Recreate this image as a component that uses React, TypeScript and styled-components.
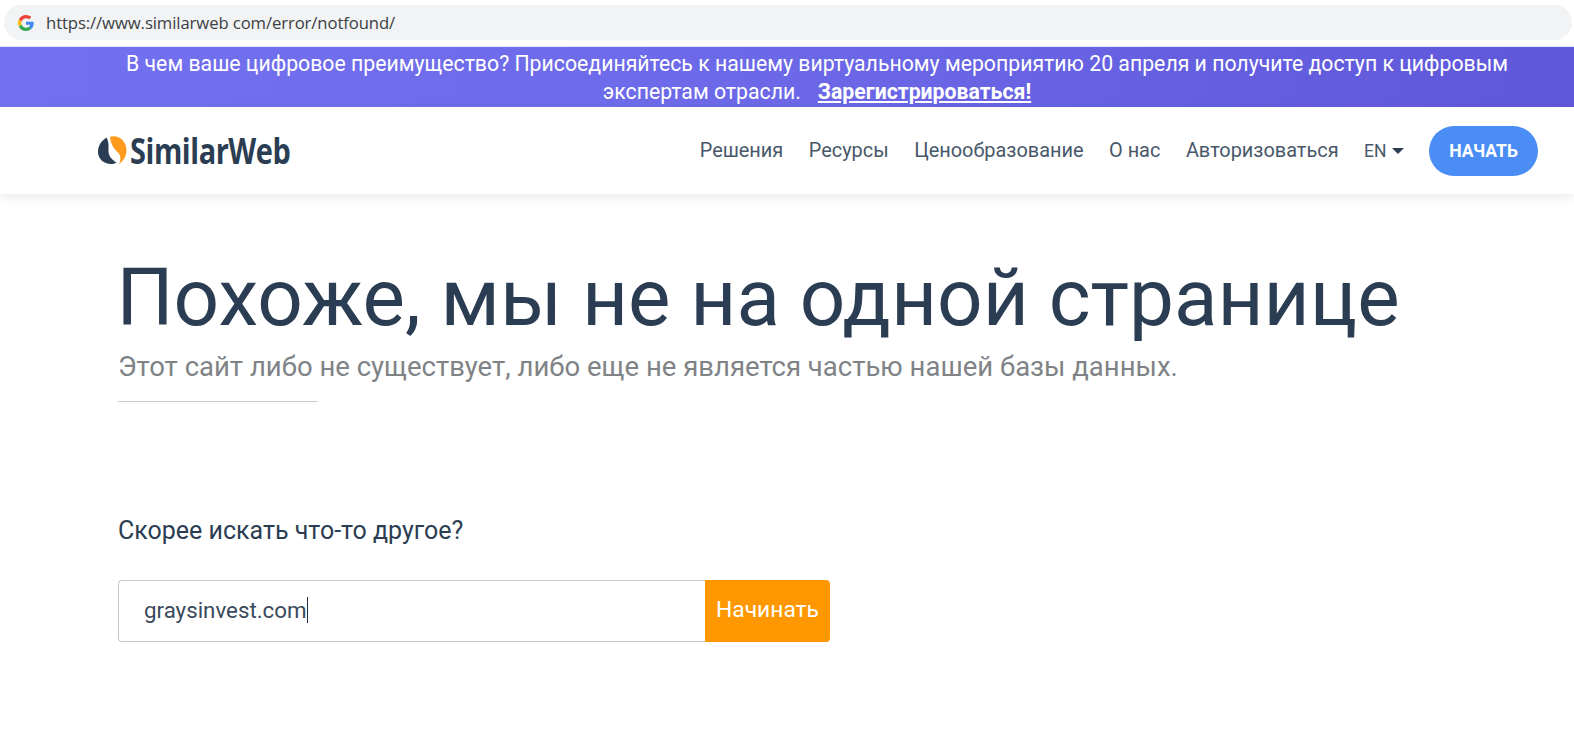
import React from 'react';
import styled, { createGlobalStyle } from 'styled-components';

const Global = createGlobalStyle`
  html, body { margin: 0; padding: 0; background: #fff; }
  body { font-family: Roboto, "Liberation Sans", sans-serif; color: #2b3d52; overflow: hidden; }
`;
const Page = styled.div`width: 1574px; height: 737px; overflow: hidden; background: #fff;`;
const BrowserBar = styled.div`height: 47px; box-sizing: border-box; padding: 5px 2px 6px 4px; border-bottom: 1px solid #e3e6f5;`;
const AddressField = styled.div`
  height: 35px; border-radius: 18px; background: #f1f3f4; display: flex; align-items: center; gap: 12px; padding-left: 14px;
`;
const UrlText = styled.span`font: 400 16.7px "Open Sans", sans-serif; color: #3c4043; letter-spacing: -0.1px;`;
const Banner = styled.div`
  height: 60px; box-sizing: border-box; background: linear-gradient(90deg, #7471f0 0%, #6e6bea 40%, #5f58da 100%);
  color: #fff; font-size: 21.25px; line-height: 28px; text-align: center; padding: 3px 60px 0 120px;
`;
const BannerLink = styled.a`font-weight: 700; text-decoration: underline; margin-left: 17px; color: #fff;`;
const Nav = styled.nav`
  height: 87px; box-sizing: border-box; display: flex; align-items: center; justify-content: space-between;
  padding: 0 36px 0 98px; background: #fff; box-shadow: 0 3px 10px rgba(40, 50, 70, 0.1); position: relative;
`;
const Logo = styled.div`display: flex; align-items: center; gap: 3px;`;
const LogoWord = styled.span`
  font: 700 35px "Open Sans", sans-serif; color: #2b3d52; display: inline-block; width: 160px; white-space: nowrap;
  transform: scaleX(0.825); transform-origin: left center; letter-spacing: -0.5px;
`;
const NavLinks = styled.div`display: flex; align-items: center; gap: 25.5px;`;
const NavLink = styled.a`font-size: 19.92px; color: #48586a; margin-top: -1px;`;
const Lang = styled.span`display: flex; align-items: center; gap: 5px; font-size: 17.5px; color: #48586a;`;
const Caret = styled.i`width: 0; height: 0; border-left: 6px solid transparent; border-right: 6px solid transparent; border-top: 6px solid #2b3d52;`;
const StartButton = styled.button`
  width: 109px; height: 50px; border: 0; border-radius: 25px; background: #4a8df5; color: #fff;
  font: 700 17.5px Roboto, sans-serif; padding: 0;
`;
const Main = styled.main`padding: 52px 0 0 118px;`;
const Title = styled.h1`font-size: 80px; font-weight: 400; line-height: 104px; margin: 0 0 0 -1.5px; color: #2b3d52;`;
const Subtitle = styled.p`font-size: 27.5px; line-height: 30px; margin: 2px 0 0; color: #808386;`;
const Divider = styled.hr`width: 200px; height: 1px; border: 0; background: #c9cbce; margin: 19px 0 0;`;
const Prompt = styled.p`font-size: 25px; line-height: 30px; margin: 114px 0 0; color: #2b3d52;`;
const SearchForm = styled.div`display: flex; width: 712px; height: 62px; margin-top: 34px;`;
const Field = styled.div`
  flex: 1; box-sizing: border-box; border: 1px solid #c6c8ca; border-right: 0; border-radius: 4px 0 0 4px;
  display: flex; align-items: center; padding: 0 0 2px 25px; font-size: 22.3px; color: #3a4a5c;
`;
const Cursor = styled.span`width: 1px; height: 26px; background: #1c2f4a;`;
const Submit = styled.button`
  width: 125px; border: 0; border-radius: 0 4px 4px 0; background: #ff9800; color: #fff; font: 400 22.8px Roboto, sans-serif; padding: 0 0 3px;
`;

const GoogleIcon = () => (
  <svg width="16" height="16" viewBox="0 0 48 48" aria-hidden="true">
    <path fill="#EA4335" d="M24 9.500c3.500 0 6.700 1.200 9.200 3.600l6.900-6.900C35.900 2.400 30.400 0 24 0 14.600 0 6.500 5.400 2.600 13.200l8 6.200C12.500 13.600 17.800 9.500 24 9.500z"/>
    <path fill="#4285F4" d="M47 24.500c0-1.600-.2-3.100-.4-4.500H24v9h12.900c-.6 3-2.200 5.500-4.800 7.200l7.700 6C44.300 38 47 31.800 47 24.500z"/>
    <path fill="#FBBC05" d="M10.500 28.600C10 27.200 9.800 25.600 9.800 24s.3-3.200.8-4.600l-8-6.200C.9 16.500 0 20.100 0 24s.9 7.500 2.600 10.800l7.900-6.200z"/>
    <path fill="#34A853" d="M24 48c6.500 0 11.900-2.100 15.800-5.800l-7.700-6c-2.100 1.400-4.900 2.300-8.100 2.300-6.200 0-11.500-4.200-13.400-9.800l-8 6.200C6.500 42.600 14.600 48 24 48z"/>
  </svg>
);

const LogoMark = () => (
  <svg width="29" height="29" viewBox="0 0 29 29" aria-hidden="true">
    <path fill="#2b3d52" d="M8.500 1.500C3 5 0 10 0 16c0 7 6 12 13 12 2 0 4-.5 5.500-1.500C14 24 10.500 20 10.500 15c0-5 .5-9-2-13.500z"/>
    <path fill="#ff9a1c" d="M12 .8C20-2 28.500 5 28.500 14c0 6-3 11-7.500 14 2-4 2-8-.5-11C16 13 13 9 12 .8z"/>
  </svg>
);

export default function App() {
  return (
    <Page>
      <Global />
      <BrowserBar>
        <AddressField>
          <GoogleIcon />
          <UrlText>https://www.similarweb com/error/notfound/</UrlText>
        </AddressField>
      </BrowserBar>
      <Banner>
        В чем ваше цифровое преимущество? Присоединяйтесь к нашему виртуальному мероприятию 20 апреля и получите доступ к цифровым экспертам отрасли.
        <BannerLink>Зарегистрироваться!</BannerLink>
      </Banner>
      <Nav>
        <Logo>
          <LogoMark />
          <LogoWord>SimilarWeb</LogoWord>
        </Logo>
        <NavLinks>
          <NavLink>Решения</NavLink>
          <NavLink>Ресурсы</NavLink>
          <NavLink>Ценообразование</NavLink>
          <NavLink>О нас</NavLink>
          <NavLink>Авторизоваться</NavLink>
          <Lang>EN <Caret /></Lang>
          <StartButton>НАЧАТЬ</StartButton>
        </NavLinks>
      </Nav>
      <Main>
        <Title>Похоже, мы не на одной странице</Title>
        <Subtitle>Этот сайт либо не существует, либо еще не является частью нашей базы данных.</Subtitle>
        <Divider />
        <Prompt>Скорее искать что-то другое?</Prompt>
        <SearchForm>
          <Field>graysinvest.com<Cursor /></Field>
          <Submit>Начинать</Submit>
        </SearchForm>
      </Main>
    </Page>
  );
}
